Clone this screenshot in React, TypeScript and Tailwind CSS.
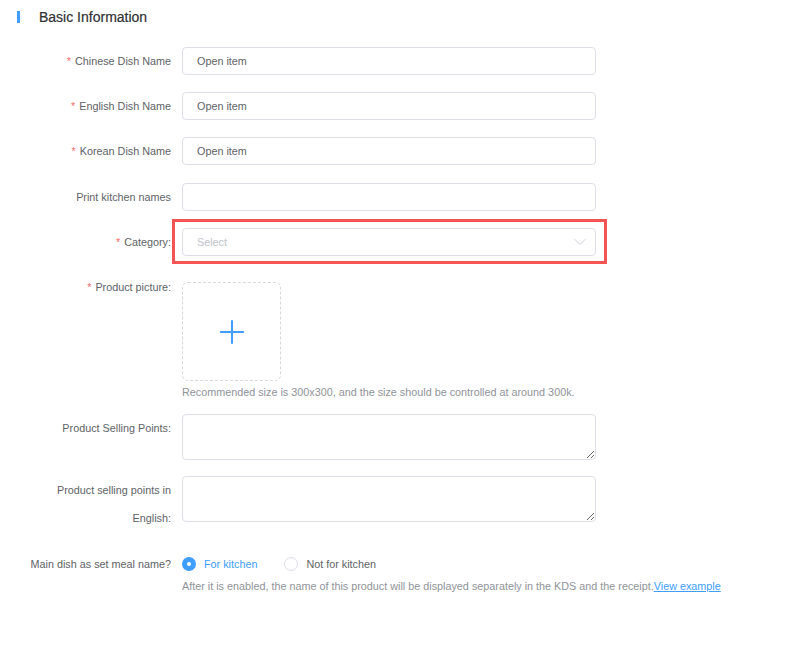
import { ChevronDown, Plus } from 'lucide-react';
import type { ReactNode } from 'react';

function Label({ children, required }: { children: ReactNode; required?: boolean }) {
  return (
    <label className="w-[162px] shrink-0 pr-[11px] text-right text-[10.8px] leading-[28px] text-[#606266]">
      {required && <span className="mr-[4px] text-[#f56c6c]">*</span>}
      {children}
    </label>
  );
}

function TextInput({ value }: { value?: string }) {
  return (
    <input
      readOnly
      value={value ?? ''}
      className="h-[28px] w-[414px] rounded-[4px] border border-[#dcdfe6] bg-white px-[14px] text-[10.8px] text-[#606266] outline-none"
    />
  );
}

export default function App() {
  const names = [
    { label: 'Chinese Dish Name', value: 'Open item', mt: 'mt-[20px]' },
    { label: 'English Dish Name', value: 'Open item', mt: 'mt-[17px]' },
    { label: 'Korean Dish Name', value: 'Open item', mt: 'mt-[17px]' }
  ];
  return (
    <div className="h-[646px] w-[808px] overflow-hidden bg-white font-['Liberation_Sans',Arial,sans-serif]">
      <div className="flex items-center pl-[17px] pt-[7px]">
        <div className="h-[12px] w-[3px] bg-[#409eff]" />
        <div className="ml-[19px] text-[14px] leading-[20px] text-[#303133] [-webkit-text-stroke:0.2px_#303133]">Basic Information</div>
      </div>

      <div className="flex flex-col pl-[20px]">
        {names.map((n) => (
          <div key={n.label} className={`flex ${n.mt}`}>
            <Label required>{n.label}</Label>
            <TextInput value={n.value} />
          </div>
        ))}

        <div className="mt-[18px] flex">
          <Label>Print kitchen names</Label>
          <TextInput />
        </div>

        <div className="mt-[17px] flex">
          <Label required>Category:</Label>
          <div className="relative">
            <div className="flex h-[28px] w-[414px] items-center justify-between rounded-[4px] border border-[#dcdfe6] bg-white pl-[14px] pr-[5px] text-[10.8px] text-[#c0c4cc]">
              <span>Select</span>
              <ChevronDown size={20} strokeWidth={1} className="text-[#c0c4cc]" />
            </div>
            <div className="absolute left-[-10px] top-[-9px] h-[45px] w-[435px] border-[3px] border-[#f45454]" />
          </div>
        </div>

        <div className="mt-[17px] flex">
          <Label required>Product picture:</Label>
          <div className="flex flex-col">
            <div className="mt-[9px] grid h-[99px] w-[99px] place-items-center rounded-[6px] border border-dashed border-[#d9d9d9]">
              <Plus size={38} strokeWidth={1.3} className="text-[#409eff]" />
            </div>
            <div className="text-[10.8px] leading-[22px] text-[#909399]">
              Recommended size is 300x300, and the size should be controlled at around 300k.
            </div>
          </div>
        </div>

        <div className="mt-[11px] flex">
          <Label>Product Selling Points:</Label>
          <textarea readOnly className="h-[46px] w-[414px] rounded-[4px] border border-[#dcdfe6] outline-none" />
        </div>

        <div className="mt-[16px] flex">
          <Label>Product selling points in English:</Label>
          <textarea readOnly className="h-[46px] w-[414px] rounded-[4px] border border-[#dcdfe6] outline-none" />
        </div>

        <div className="mt-[18px] flex">
          <label className="w-[162px] shrink-0 pr-[11px] text-right text-[10.8px] leading-[28px] text-[#606266]">
            Main dish as set meal name?
          </label>
          <div className="flex flex-col">
            <div className="flex h-[28px] items-center text-[10.8px]">
              <span className="grid h-[14px] w-[14px] place-items-center rounded-full bg-[#409eff]">
                <span className="h-[4px] w-[4px] rounded-full bg-white" />
              </span>
              <span className="ml-[8px] text-[#409eff]">For kitchen</span>
              <span className="ml-[27px] h-[14px] w-[14px] rounded-full border border-[#dcdfe6] bg-white" />
              <span className="ml-[8px] text-[#606266]">Not for kitchen</span>
            </div>
            <div className="text-[10.8px] leading-[16px] text-[#909399]">
              After it is enabled, the name of this product will be displayed separately in the KDS and the receipt.
              <span className="text-[#409eff] underline">View example</span>
            </div>
          </div>
        </div>
      </div>
    </div>
  );
}
